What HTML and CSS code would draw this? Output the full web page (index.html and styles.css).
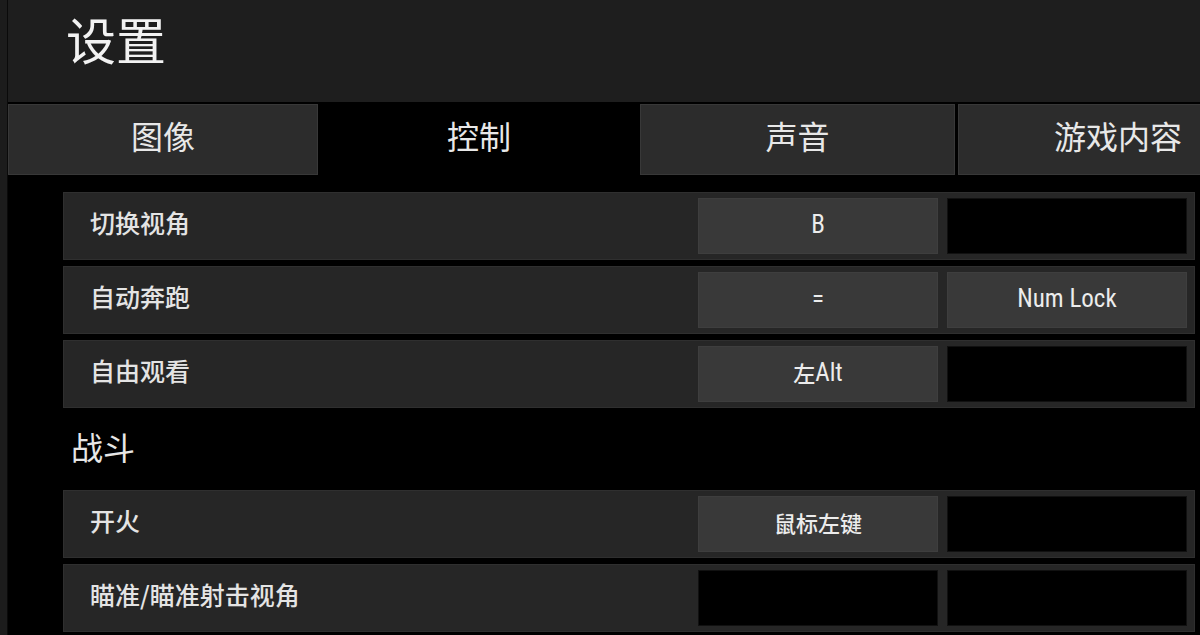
FILE: index.html
```html
<!DOCTYPE html>
<html lang="zh-CN">
<head>
<meta charset="utf-8">
<title>设置</title>
<link rel="stylesheet" href="styles.css">
</head>
<body>
<div class="screen">
  <div class="edge"></div>
  <div class="main">
    <header class="header"><h1 class="title">设置</h1></header>
    <nav class="tabs">
      <div class="tab t1">图像</div>
      <div class="tab t2 active">控制</div>
      <div class="tab t3">声音</div>
      <div class="tab t4">游戏内容</div>
    </nav>
    <section class="list">
      <div class="row">
        <div class="label">切换视角</div>
        <div class="key"><span class="lat">B</span></div>
        <div class="key empty"></div>
      </div>
      <div class="row">
        <div class="label">自动奔跑</div>
        <div class="key"><span class="lat">=</span></div>
        <div class="key"><span class="lat">Num Lock</span></div>
      </div>
      <div class="row">
        <div class="label">自由观看</div>
        <div class="key">左<span class="lat">Alt</span></div>
        <div class="key empty"></div>
      </div>
      <div class="section-title">战斗</div>
      <div class="row">
        <div class="label">开火</div>
        <div class="key">鼠标左键</div>
        <div class="key empty"></div>
      </div>
      <div class="row">
        <div class="label">瞄准/瞄准射击视角</div>
        <div class="key empty"></div>
        <div class="key empty"></div>
      </div>
    </section>
  </div>
</div>
</body>
</html>
```

FILE: styles.css
```css
html, body {
  margin: 0;
  padding: 0;
  background: #000;
  width: 1200px;
  height: 635px;
  overflow: hidden;
  font-family: "Noto Sans CJK SC", "Noto Sans", sans-serif;
  color: #e6e6e6;
}

.screen {
  display: flex;
  height: 635px;
  width: 1200px;
}

.edge {
  flex: 0 0 7px;
  background: #1c1c1c;
  border-right: 1px solid #0a0a0a;
}

.main {
  flex: 1;
  min-width: 0;
  overflow: hidden;
}

.header {
  height: 102px;
  box-sizing: border-box;
  background: #1e1e1e;
  padding: 13px 0 0 58px;
}

.title {
  margin: 0;
  font-size: 50px;
  line-height: 1;
  font-weight: 400;
  color: #f2f2f2;
}

.tabs {
  display: flex;
  margin-top: 2px;
  height: 71px;
}

.tab {
  flex: 0 0 auto;
  box-sizing: border-box;
  height: 71px;
  background: #2c2c2c;
  border: 1px solid #383838;
  display: flex;
  align-items: center;
  justify-content: center;
  font-size: 32px;
  color: #e8e8e8;
  padding-bottom: 9px;
}

.t1 { width: 310px; }
.t2 { width: 322px; }
.t3 { width: 315px; }
.t4 { width: 320px; margin-left: 3px; }

.tab.active {
  background: transparent;
  border-color: transparent;
}

.list {
  display: flex;
  flex-direction: column;
  gap: 6px;
  padding: 17px 5px 0 55px;
}

.row {
  height: 68px;
  box-sizing: border-box;
  background: #262626;
  border: 1px solid #2f2f2f;
  display: flex;
  align-items: stretch;
  gap: 9px;
  padding: 5px 7px 5px 26px;
}

.label {
  flex: 1;
  display: flex;
  align-items: center;
  font-size: 25px;
  font-weight: 500;
  color: #e4e4e4;
  padding-bottom: 9px;
}

.key {
  flex: 0 0 240px;
  box-sizing: border-box;
  background: #393939;
  border: 1px solid #3e3e3e;
  display: flex;
  align-items: center;
  justify-content: center;
  font-family: "Noto Sans CJK SC", sans-serif;
  font-size: 22px;
  font-weight: 500;
  color: #ececec;
  padding-bottom: 4px;
}

.lat {
  font-family: "Roboto Condensed", Roboto, sans-serif;
  font-size: 25px;
  font-weight: 400;
}

.key.empty {
  background: #000;
  border-color: #111;
}

.section-title {
  height: 70px;
  display: flex;
  align-items: center;
  padding-left: 8px;
  padding-bottom: 6px;
  box-sizing: border-box;
  font-size: 32px;
  color: #e6e6e6;
}
```
